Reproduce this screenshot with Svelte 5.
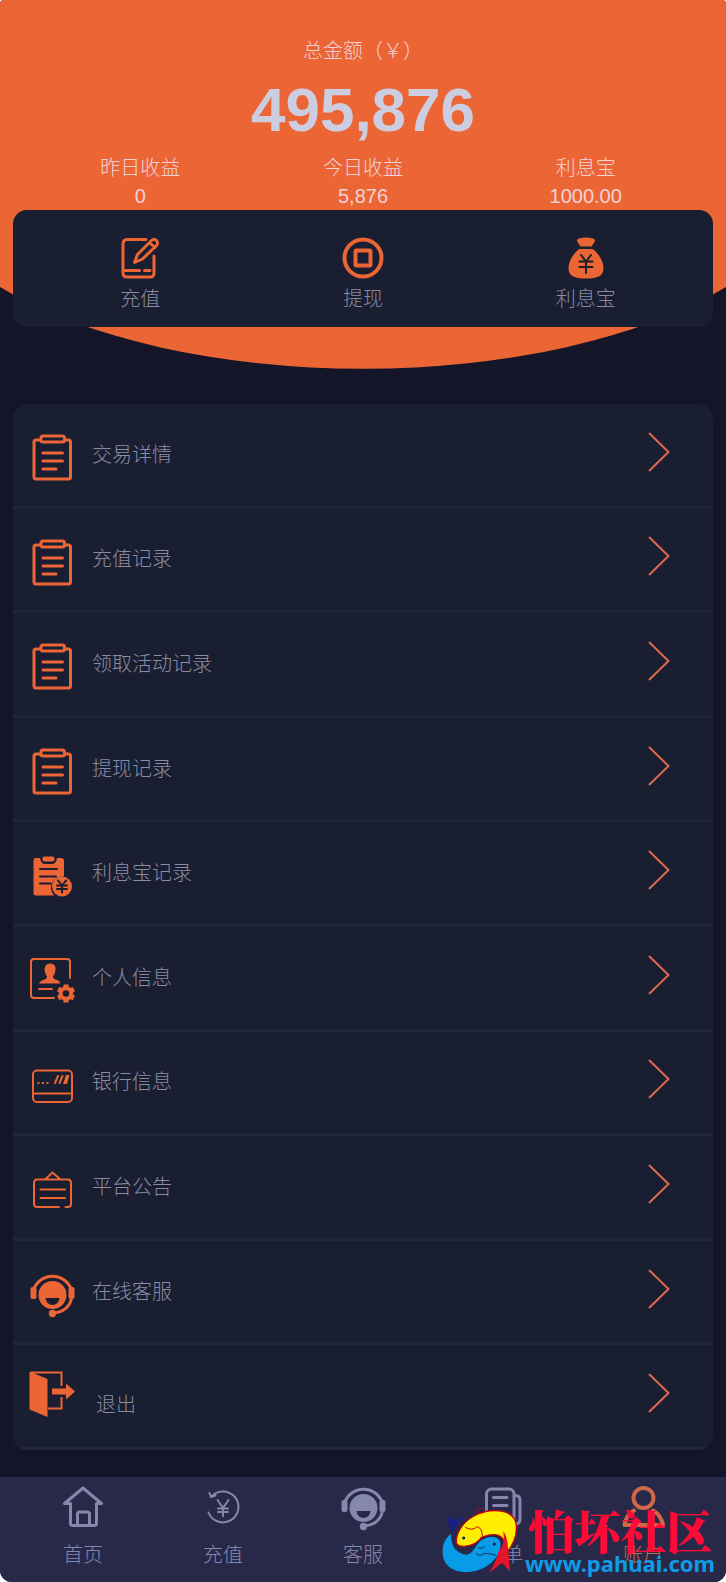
<script lang="ts">
  const balance = "495,876";

  const stats = [
    { label: "昨日收益", value: "0" },
    { label: "今日收益", value: "5,876" },
    { label: "利息宝", value: "1000.00" },
  ];

  const actions = [
    { icon: "edit", label: "充值" },
    { icon: "coin", label: "提现" },
    { icon: "bag", label: "利息宝" },
  ];

  const rows = [
    { icon: "clipboard", label: "交易详情" },
    { icon: "clipboard", label: "充值记录" },
    { icon: "clipboard", label: "领取活动记录" },
    { icon: "clipboard", label: "提现记录" },
    { icon: "bill", label: "利息宝记录" },
    { icon: "profile", label: "个人信息" },
    { icon: "card", label: "银行信息" },
    { icon: "notice", label: "平台公告" },
    { icon: "headset", label: "在线客服" },
    { icon: "exit", label: "退出" },
  ];

  const tabs = [
    { icon: "home", label: "首页" },
    { icon: "recharge", label: "充值" },
    { icon: "headset", label: "客服" },
    { icon: "orders", label: "订单" },
    { icon: "user", label: "账户" },
  ];
  let active = $state("账户");
</script>

{#snippet glyph(name: string)}
  <svg class="icon {name}" viewBox="0 0 48 48" aria-hidden="true">
    {#if name === "edit"}
      <path class="s3" d="M30 5.500H11Q7 5.500 7 10V39Q7 43 11 43H34Q38 43 38 39V22M9 36.500H23.500M28.500 36.500H34" />
      <path class="s3" d="M18.500 28.500L21.500 20.500L35.500 6.500Q38 4 40.500 6.500Q42.500 9 40.500 11.500L26.500 25ZM34 9L39 13.500" />
    {:else if name === "coin"}
      <circle class="s4" cx="24" cy="24" r="18.500" />
      <rect class="s4" x="16.500" y="16.500" width="15" height="15" rx="1" />
    {:else if name === "bag"}
      <path class="fill" d="M17 4.500Q24 2.500 31 4.500Q34 5.500 32.500 8L29.500 12.500H18.500L15.500 8Q14 5.500 17 4.500ZM17.500 15H30.500C36 18.500 41.500 27 41.500 34C41.500 42 36 44.500 24 44.500S6.500 42 6.500 34C6.500 27 12 18.500 17.500 15Z" />
      <path class="cut" d="M19 21L24 27.500L29 21M24 27V39M17.500 27.500H30.500M17.500 33H30.500" />
    {:else if name === "clipboard"}
      <path class="s3" d="M12 7H8Q6 7 6 9V44Q6 46 8 46H40.500Q42.500 46 42.500 44V9Q42.500 7 40.500 7H37" />
      <rect class="s3" x="13" y="3" width="23.500" height="6" rx="2" />
      <path class="s3" d="M15 20H34.500M15 28H34.500M15 36H28" />
    {:else if name === "bill"}
      <path class="fill" d="M8 6H12Q13 12 17 12H24Q28 12 29 6H33Q36 6 36 9V24.500A11.500 11.500 0 0 0 26 43.500H8Q5.500 43.500 5.500 41V9Q5.500 6 8 6Z" />
      <rect class="fill" x="14.500" y="4.500" width="12" height="5" rx="2" />
      <path class="cut" d="M12 17H29M12 24.500H28M12 31.500H23" />
      <circle class="fill" cx="34" cy="34.500" r="10" />
      <path class="cut" d="M30 28.500L34 33.500L38 28.500M34 33V40.500M29 33.500H39M29 37H39" />
    {:else if name === "profile"}
      <path class="s2" d="M42 22V6Q42 3 39 3H6Q3 3 3 6V39Q3 42 6 42H26M11 33H24" />
      <path class="fill" d="M22 7.500C26 7.500 28 10 27.500 14Q27 18 25 20.500Q25 23 29 24Q32 25 32 27.500H11Q12 25 15 24Q19 23 19 20.500Q17 18 16.500 14Q16.500 7.500 22 7.500Z" />
      <circle class="s4" cx="38" cy="37.500" r="5.300" />
      <path class="tooth" d="M38 31V28.500M38 44V46.500M32.400 34.200L30.200 33M43.600 40.800L45.800 42M32.400 40.800L30.200 42M43.600 34.200L45.800 33" />
    {:else if name === "card"}
      <rect class="s2" x="5" y="9.500" width="39" height="31.500" rx="4" />
      <path class="s2" d="M5 32.500H44M27 22L30 15M31.500 22L34.500 15" />
      <path class="fill" d="M9.500 21H11.500V23H9.500ZM14 21H16V23H14ZM18.500 21H20.500V23H18.500ZM35 23L38 14H41.500L39 23Z" />
    {:else if name === "notice"}
      <path class="s2" d="M31 42H9Q6 42 6 39V18Q6 14.500 9 14.500H40Q43 14.500 43 18V39Q43 42 40 42H37.500M17.500 14L24.500 7.500L32 14M12.500 24.500H37M12.500 33H37" />
    {:else if name === "headset"}
      <path class="fill" fill-rule="evenodd" d="M24.500 11A14 14 0 0 1 24.500 39A14 14 0 0 1 24.500 11ZM17.500 28Q18.500 35 24.500 35T31.500 28Z" />
      <path class="s3" d="M5.500 20A20 20 0 0 1 43.500 20M43.500 28Q41 41 26 43" />
      <rect class="fill" x="2.500" y="17" width="6" height="12" rx="2" />
      <rect class="fill" x="40.500" y="17" width="6" height="12" rx="2" />
      <circle class="fill" cx="24.500" cy="43.500" r="3.700" />
    {:else if name === "exit"}
      <path class="fill" d="M1.500 -3.500L19.500 4V42L1.500 34.500Z" />
      <path class="s2" d="M3 -2.500H33.500V11M33.500 22V33.500H20" />
      <path class="fill" d="M24 13.500H38V8.500L47 16.500L38 24.500V19.500H24Z" />
    {:else if name === "home"}
      <path class="s3" d="M11.500 20.500H5.500L24 5L42.500 20.500H37.500V40Q37.500 42.500 35 42.500H13.500Q11.500 42.500 11.500 40ZM18.500 42V31Q18.500 29 20.500 29H28Q30.500 29 30.500 31V42" />
    {:else if name === "recharge"}
      <path class="s2" d="M9.500 29.500A15.500 15.500 0 1 0 12 14L16.500 12.500M12 14L10.500 10M18.500 17L24 25L29.500 17M24 25V33M19 25.500H29M19 29H29" />
    {:else if name === "orders"}
      <rect class="s3" x="7.500" y="6" width="27.500" height="37" rx="5" />
      <path class="s3" d="M14.500 14.500H28M14.500 22.500H28M36 12.500Q41 12.500 41 17V36Q41 41 36 41" />
    {:else if name === "user"}
      <circle class="s4" cx="24.500" cy="15" r="10" />
      <path class="s4" d="M15 27.500Q7 32 5.500 42H44Q42 32 34 27.500" />
    {/if}
  </svg>
{/snippet}

<div class="page">
  <header class="hero">
    <svg class="curve" viewBox="0 0 726 369" preserveAspectRatio="none" aria-hidden="true">
      <path d="M0 0H726V287A450 200 0 0 1 0 287Z" />
    </svg>
    <p class="title">总金额（￥）</p>
    <p class="balance">{balance}</p>
    <dl class="stats">
      {#each stats as s}
        <div>
          <dt>{s.label}</dt>
          <dd>{s.value}</dd>
        </div>
      {/each}
    </dl>
    <div class="actions">
      {#each actions as a}
        <button type="button">
          {@render glyph(a.icon)}
          <span>{a.label}</span>
        </button>
      {/each}
    </div>
  </header>

  <main class="list">
    {#each rows as r}
      <button type="button" class="row {r.icon}">
        {@render glyph(r.icon)}
        <span class="label">{r.label}</span>
        <svg class="chevron" viewBox="0 0 22 40" aria-hidden="true">
          <path d="M1 1L20.500 20L1 39" />
        </svg>
      </button>
    {/each}
  </main>

  <nav class="tabs">
    {#each tabs as t}
      <a
        href="#{t.icon}"
        class:active={active === t.label}
        onclick={() => (active = t.label)}
      >
        {@render glyph(t.icon)}
        <span>{t.label}</span>
      </a>
    {/each}
  </nav>

  <!-- community mark, floats over the tab bar -->
  <div class="mark">
    <svg viewBox="0 0 228 201" aria-hidden="true">
      <path fill="#17208a" d="M18 24L34 38L68 20L44 48L34 76L20 52Z" />
      <path fill="none" stroke="#b80d30" stroke-width="2" d="M104 24V2H128M112 14H140" />
      <path fill="#282949" d="M60 110L180 60L205 130L150 185L40 150L28 80Z" />
      <path fill="#ffee00" stroke="#c00018" stroke-width="4" d="M43 104C42 68 68 36 108 18C158 -2 218 6 223 52C226 86 210 118 190 136C196 108 186 84 160 80C144 78 130 84 118 88C106 108 78 118 54 114Q45 112 43 104Z" />
      <path fill="#079be8" d="M2 138C0 110 10 88 28 78C24 110 42 136 72 140C94 140 98 112 116 98C136 84 170 80 176 106C176 142 150 172 110 186C64 202 6 188 2 138Z" />
      <path fill="none" stroke="#c00018" stroke-width="3" d="M70 58Q90 70 106 56Q120 60 121 84" />
      <path fill="none" stroke="#17305c" stroke-width="3" d="M102 136Q114 148 126 136Q148 136 162 142M108 118Q120 126 128 114" />
      <circle cx="65" cy="90" r="4.500" fill="#101c50" />
      <circle cx="157" cy="108" r="4.500" fill="#101c50" />
      <path fill="#e5142b" d="M184 68Q198 92 198 122L204 190L180 164L142 194Q162 164 170 130Q190 112 184 68Z" />
    </svg>
    <div class="mark-text">
      <strong>怕坏社区</strong>
      <span>www.pahuai.com</span>
    </div>
  </div>
</div>

<style>
  :global(body) {
    background: #fff;
  }

  .page {
    --orange: #ec6535;
    --panel: #191e30;
    --muted: #8a8ca6;
    position: relative;
    display: flex;
    flex-direction: column;
    min-height: 100vh;
    overflow: hidden;
    border-radius: 4px 4px 12px 12px;
    background: #141528;
    color: var(--muted);
    font-family: "Liberation Sans", "Noto Sans CJK SC", sans-serif;
    font-size: 20px;
    font-weight: 300;
    line-height: 28px;
  }

  p, dl, dd { margin: 0; }

  button {
    padding: 0;
    border: 0;
    background: none;
    color: inherit;
    font: inherit;
    cursor: pointer;
  }

  .icon {
    flex: none;
    display: block;
    width: 48px;
    height: 48px;
    overflow: visible;
    color: var(--orange);
    stroke-linecap: round;
    stroke-linejoin: round;
  }
  .s2, .s3, .s4, .tooth { fill: none; stroke: currentColor; }
  .s2 { stroke-width: 2; }
  .s3 { stroke-width: 3; }
  .s4 { stroke-width: 4; }
  .tooth { stroke-width: 5; stroke-linecap: butt; }
  .cut { fill: none; stroke: var(--panel); stroke-width: 2; }
  .fill { fill: currentColor; }
  .exit { stroke-linecap: butt; stroke-linejoin: miter; }

  .hero {
    position: relative;
    padding: 37px 13px 0;
    color: #f0d2d6;
    text-align: center;
  }
  .curve {
    position: absolute;
    top: 0;
    left: 0;
    width: 100%;
    height: 369px;
    fill: var(--orange);
  }
  .title, .balance, .stats, .actions { position: relative; }
  .balance {
    margin: 9px 0 8px;
    color: #cccde1;
    font-size: 62px;
    font-weight: 700;
    line-height: 72px;
  }
  .stats, .actions {
    display: grid;
    grid-template-columns: repeat(3, 1fr);
    padding: 0 16px;
  }
  .actions {
    padding: 24px 16px 14px;
    border-radius: 14px;
    background: var(--panel);
    color: var(--muted);
  }
  .actions button {
    display: flex;
    flex-direction: column;
    align-items: center;
    gap: 3px;
  }

  .list {
    flex: 1;
    display: grid;
    grid-auto-rows: 1fr;
    margin: 77px 13px 27px;
    overflow: hidden;
    border-radius: 14px;
    background: var(--panel);
  }
  .row {
    display: flex;
    align-items: center;
    gap: 16px;
    min-height: 80px;
    padding: 0 43px 0 15px;
    border-bottom: 3px solid #22263a;
    text-align: left;
  }
  .row .icon { margin-top: 5px; }
  .label { flex: 1; }
  .row.exit .label { padding: 18px 0 0 4px; }
  .chevron {
    width: 22px;
    height: 40px;
    margin-bottom: 6px;
    fill: none;
    stroke: #dc6b4c;
    stroke-width: 2;
  }

  .tabs {
    display: grid;
    grid-template-columns: repeat(5, 1fr);
    padding: 6px 13px 13px;
    background: #282949;
  }
  .tabs a {
    display: flex;
    flex-direction: column;
    align-items: center;
    gap: 10px;
    color: #8587ad;
    text-decoration: none;
  }
  .tabs .icon { color: inherit; }
  .tabs a.active { color: #cf6846; }

  .mark {
    position: absolute;
    right: 11px;
    bottom: 7px;
    display: flex;
    align-items: center;
    gap: 7px;
    pointer-events: none;
  }
  .mark svg { width: 76px; height: 67px; }
  .mark-text {
    display: flex;
    flex-direction: column;
    align-items: center;
  }
  .mark strong {
    color: #ff0a36;
    font-family: "Noto Serif CJK SC", "Noto Sans CJK SC", serif;
    font-size: 46px;
    font-weight: 900;
    line-height: 44px;
  }
  .mark span {
    color: #0f9be6;
    font-family: "Noto Sans", sans-serif;
    font-size: 22px;
    font-weight: 700;
    line-height: 24px;
  }
</style>
